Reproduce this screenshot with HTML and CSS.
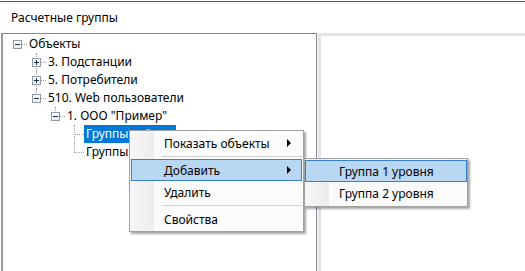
FILE: index.html
```html
<!DOCTYPE html>
<html lang="ru">
<head>
<meta charset="utf-8">
<title>Расчетные группы</title>
<link rel="stylesheet" href="styles.css">
</head>
<body>
<div class="window">
  <div class="title">Расчетные группы</div>
  <div class="panes">
    <div class="tree">
      <div class="row">
        <span class="conn h"><span class="box minus"></span></span>
        <span class="label">Объекты</span>
      </div>
      <div class="row lvl1">
        <span class="conn v-full h"><span class="box plus"></span></span>
        <span class="label">3. Подстанции</span>
      </div>
      <div class="row lvl1">
        <span class="conn v-full h"><span class="box plus"></span></span>
        <span class="label">5. Потребители</span>
      </div>
      <div class="row lvl1">
        <span class="conn v-top h"><span class="box minus"></span></span>
        <span class="label">510. Web пользователи</span>
      </div>
      <div class="row lvl2">
        <span class="conn v-top h"><span class="box minus"></span></span>
        <span class="label">1. ООО "Пример"</span>
      </div>
      <div class="row lvl3">
        <span class="conn v-full h"></span>
        <span class="label selected">Группы учёта</span>
      </div>
      <div class="row lvl3">
        <span class="conn v-top h"></span>
        <span class="label">Группы</span>
      </div>
    </div>
    <div class="detail"></div>
  </div>
</div>

<div class="menu main-menu">
  <div class="item sub">Показать объекты</div>
  <div class="sep"></div>
  <div class="item sub active">Добавить</div>
  <div class="item">Удалить</div>
  <div class="sep"></div>
  <div class="item">Свойства</div>
</div>

<div class="menu sub-menu">
  <div class="item active">Группа 1 уровня</div>
  <div class="item">Группа 2 уровня</div>
</div>
</body>
</html>
```

FILE: styles.css
```css
* { box-sizing: border-box; }

html, body {
  margin: 0;
  padding: 0;
}

body {
  position: relative;
  width: 525px;
  height: 271px;
  overflow: hidden;
  background: #ffffff;
  font-family: "Noto Sans", "Open Sans", sans-serif;
  font-size: 12px;
  color: #000000;
}

.window {
  height: 270px;
  margin-top: 1px;
  border-top: 1px solid #5c5c5c;
  padding-left: 1px;
  display: flex;
  flex-direction: column;
}

.title {
  height: 31px;
  flex: none;
  display: flex;
  align-items: center;
  padding-left: 10px;
}

.panes {
  flex: 1;
  display: flex;
  min-height: 0;
}

.tree {
  width: 316px;
  flex: none;
  border: 1px solid #828790;
  border-bottom: none;
  border-left: 2px solid #9a9a9a;
  padding-top: 1px;
  padding-left: 5px;
}

.detail {
  flex: 1;
  margin-left: 1px;
  border-left: 3px solid #e4e4e4;
  border-top: 3px solid #e4e4e4;
  background: #ffffff;
}

/* tree rows */
.row {
  height: 18px;
  display: flex;
  align-items: center;
}
.lvl1 { padding-left: 19px; }
.lvl2 { padding-left: 38px; }
.lvl3 { padding-left: 57px; }

.conn {
  position: relative;
  width: 19px;
  height: 18px;
  flex: none;
}
.conn.v-full::before,
.conn.v-top::before {
  content: "";
  position: absolute;
  left: 9px;
  top: 0;
  border-left: 1px dotted #a0a0a0;
}
.conn.v-full::before { height: 18px; }
.conn.v-top::before { height: 10px; }
.conn.h::after {
  content: "";
  position: absolute;
  left: 10px;
  top: 9px;
  width: 9px;
  border-top: 1px dotted #a0a0a0;
}

.box {
  position: absolute;
  z-index: 1;
  left: 5px;
  top: 5px;
  width: 9px;
  height: 9px;
  border: 1px solid #8e9aa8;
  background: linear-gradient(to bottom, #ffffff 0%, #e9ebee 100%);
}
.box::before {
  content: "";
  position: absolute;
  left: 1px;
  top: 3px;
  width: 5px;
  height: 1px;
  background: #1d2d48;
}
.box.plus::after {
  content: "";
  position: absolute;
  left: 3px;
  top: 1px;
  width: 1px;
  height: 5px;
  background: #1d2d48;
}

.label {
  padding: 0 3px 0 2px;
  height: 18px;
  line-height: 18px;
  white-space: nowrap;
}
.label.selected {
  background: #0078d7;
  color: #ffffff;
  padding-left: 2px;
  padding-right: 12px;
}

/* context menus */
.menu {
  position: absolute;
  z-index: 5;
  border: 1px solid #a0a0a0;
  background:
    linear-gradient(to right, #f7f7f7 0px, #ececec 24px, #fbfbfb 24px) no-repeat;
  box-shadow: 2px 2px 2px rgba(0, 0, 0, 0.35);
}

.main-menu {
  left: 129px;
  top: 130px;
  width: 175px;
  padding: 1px;
}

.sub-menu {
  left: 304px;
  top: 158px;
  width: 164px;
  padding: 1px 0 2px;
  z-index: 6;
}

.item {
  height: 22px;
  display: flex;
  align-items: center;
  border: 1px solid transparent;
  padding-left: 32px;
  white-space: nowrap;
}
.sub-menu .item { padding-left: 33px; }

.item.active {
  background: #b8d7f3;
  border-color: #3a7fd0;
}

.item.sub::after {
  content: "";
  margin-left: auto;
  margin-right: 10px;
  width: 0;
  height: 0;
  border-left: 4px solid #000000;
  border-top: 4px solid transparent;
  border-bottom: 4px solid transparent;
}

.sep {
  height: 5px;
  margin-left: 31px;
  padding-top: 2px;
}
.sep::before {
  content: "";
  display: block;
  border-top: 1px solid #d0d0d0;
}
```
